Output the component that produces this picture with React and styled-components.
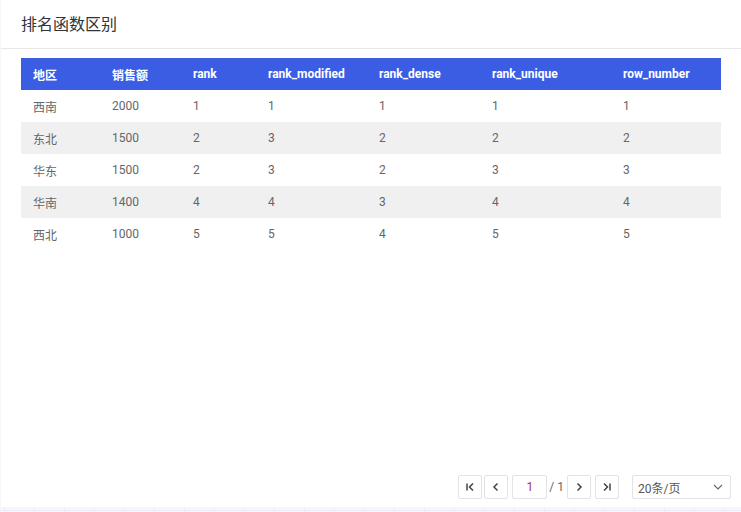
import React from "react";
import styled, { createGlobalStyle } from "styled-components";

const Global = createGlobalStyle`
  html, body { margin: 0; padding: 0; }
  body {
    width: 741px;
    height: 512px;
    overflow: hidden;
    background-color: #f6f7fb;
    background-image:
      linear-gradient(#eceef5 1px, transparent 1px),
      linear-gradient(90deg, #eceef5 1px, transparent 1px);
    background-size: 30px 30px;
    background-position: 4px 0;
    font-family: Roboto, "Noto Sans CJK SC", sans-serif;
  }
`;

const Card = styled.div`
  margin-left: 1px;
  width: 740px;
  height: 507px;
  background: #fff;
  display: flex;
  flex-direction: column;
  box-sizing: border-box;
`;

const Header = styled.div`
  height: 49px;
  padding: 0 20px;
  display: flex;
  align-items: center;
  border-bottom: 1px solid #e8e8e8;
  box-sizing: border-box;
`;

const Title = styled.h1`
  margin: 0;
  margin-top: -2px;
  font-size: 16px;
  font-weight: 400;
  color: #333;
  font-family: "Noto Sans CJK SC", sans-serif;
`;

const Body = styled.div`
  flex: 1;
  padding: 9px 20px 0 20px;
  display: flex;
  flex-direction: column;
`;

const Table = styled.table`
  width: 700px;
  border-collapse: collapse;
  table-layout: fixed;
  font-size: 12px;
`;

const Th = styled.th`
  height: 32px;
  padding: 0 12px;
  text-align: left;
  background: #3a5de4;
  color: #fff;
  font-weight: 700;
  font-family: Roboto, "Noto Sans CJK SC", sans-serif;
  white-space: nowrap;
`;

const Tr = styled.tr`
  background: ${(p) => (p.$striped ? "#f0f0f0" : "#fff")};
`;

const Td = styled.td`
  height: 32px;
  padding: 0 12px;
  color: #666;
  font-family: Roboto, "Noto Sans CJK SC", sans-serif;
`;

const Spacer = styled.div`
  flex: 1;
`;

const Pager = styled.div`
  display: flex;
  align-items: center;
  justify-content: flex-end;
  height: 24px;
  padding-right: 10px;
  margin-bottom: 8px;
  margin-right: -20px;
`;

const PageBtn = styled.button`
  width: 24px;
  height: 24px;
  margin-right: ${(p) => p.$gap ?? 2}px;
  padding: 0;
  border: 1px solid #e3e3e3;
  border-radius: 2px;
  background: #fff;
  display: flex;
  align-items: center;
  justify-content: center;
  box-sizing: border-box;
  color: #444;
`;

const PageInput = styled.div`
  width: 35px;
  height: 24px;
  border: 1px solid #e3e3e3;
  border-radius: 2px;
  box-sizing: border-box;
  display: flex;
  align-items: center;
  justify-content: center;
  font-size: 12px;
  color: #a0306a;
  margin-right: 2px;
`;

const Total = styled.span`
  font-size: 12px;
  color: #666;
  margin-right: 3px;
`;

const Select = styled.div`
  width: 99px;
  height: 24px;
  margin-left: 13px;
  border: 1px solid #e3e3e3;
  border-radius: 2px;
  box-sizing: border-box;
  display: flex;
  align-items: center;
  justify-content: space-between;
  padding: 0 6px 0 5px;
  font-size: 12px;
  color: #555;
  font-family: Roboto, "Noto Sans CJK SC", sans-serif;
`;

const Icon = ({ d }) => (
  <svg width="12" height="12" viewBox="0 0 12 12" fill="none" stroke="#444" strokeWidth="1.5">
    <path d={d} />
  </svg>
);

const columns = [
  { key: "area", label: "地区", w: 79 },
  { key: "sales", label: "销售额", w: 81 },
  { key: "rank", label: "rank", w: 75 },
  { key: "rm", label: "rank_modified", w: 111 },
  { key: "rd", label: "rank_dense", w: 113 },
  { key: "ru", label: "rank_unique", w: 131 },
  { key: "rn", label: "row_number", w: 110 },
];

const rows = [
  ["西南", "2000", 1, 1, 1, 1, 1],
  ["东北", "1500", 2, 3, 2, 2, 2],
  ["华东", "1500", 2, 3, 2, 3, 3],
  ["华南", "1400", 4, 4, 3, 4, 4],
  ["西北", "1000", 5, 5, 4, 5, 5],
];

export default function App() {
  return (
    <>
      <Global />
      <Card>
        <Header>
          <Title>排名函数区别</Title>
        </Header>
        <Body>
          <Table>
            <colgroup>
              {columns.map((c) => (
                <col key={c.key} style={{ width: c.w }} />
              ))}
            </colgroup>
            <thead>
              <tr>
                {columns.map((c) => (
                  <Th key={c.key}>{c.label}</Th>
                ))}
              </tr>
            </thead>
            <tbody>
              {rows.map((r, i) => (
                <Tr key={i} $striped={i % 2 === 1}>
                  {r.map((v, j) => (
                    <Td key={j}>{v}</Td>
                  ))}
                </Tr>
              ))}
            </tbody>
          </Table>
          <Spacer />
          <Pager>
            <PageBtn>
              <Icon d="M3 2.5v7M9 2.5L5.5 6L9 9.5" />
            </PageBtn>
            <PageBtn $gap={4}>
              <Icon d="M7.5 2.5L4 6l3.5 3.5" />
            </PageBtn>
            <PageInput>1</PageInput>
            <Total>/ 1</Total>
            <PageBtn $gap={4}>
              <Icon d="M4.5 2.5L8 6L4.5 9.5" />
            </PageBtn>
            <PageBtn $gap={0}>
              <Icon d="M3 2.5L6.5 6L3 9.5M9 2.5v7" />
            </PageBtn>
            <Select>
              <span>20条/页</span>
              <svg width="12" height="12" viewBox="0 0 12 12" fill="none" stroke="#666" strokeWidth="1.1">
                <path d="M2 4l4 4l4-4" />
              </svg>
            </Select>
          </Pager>
        </Body>
      </Card>
    </>
  );
}
